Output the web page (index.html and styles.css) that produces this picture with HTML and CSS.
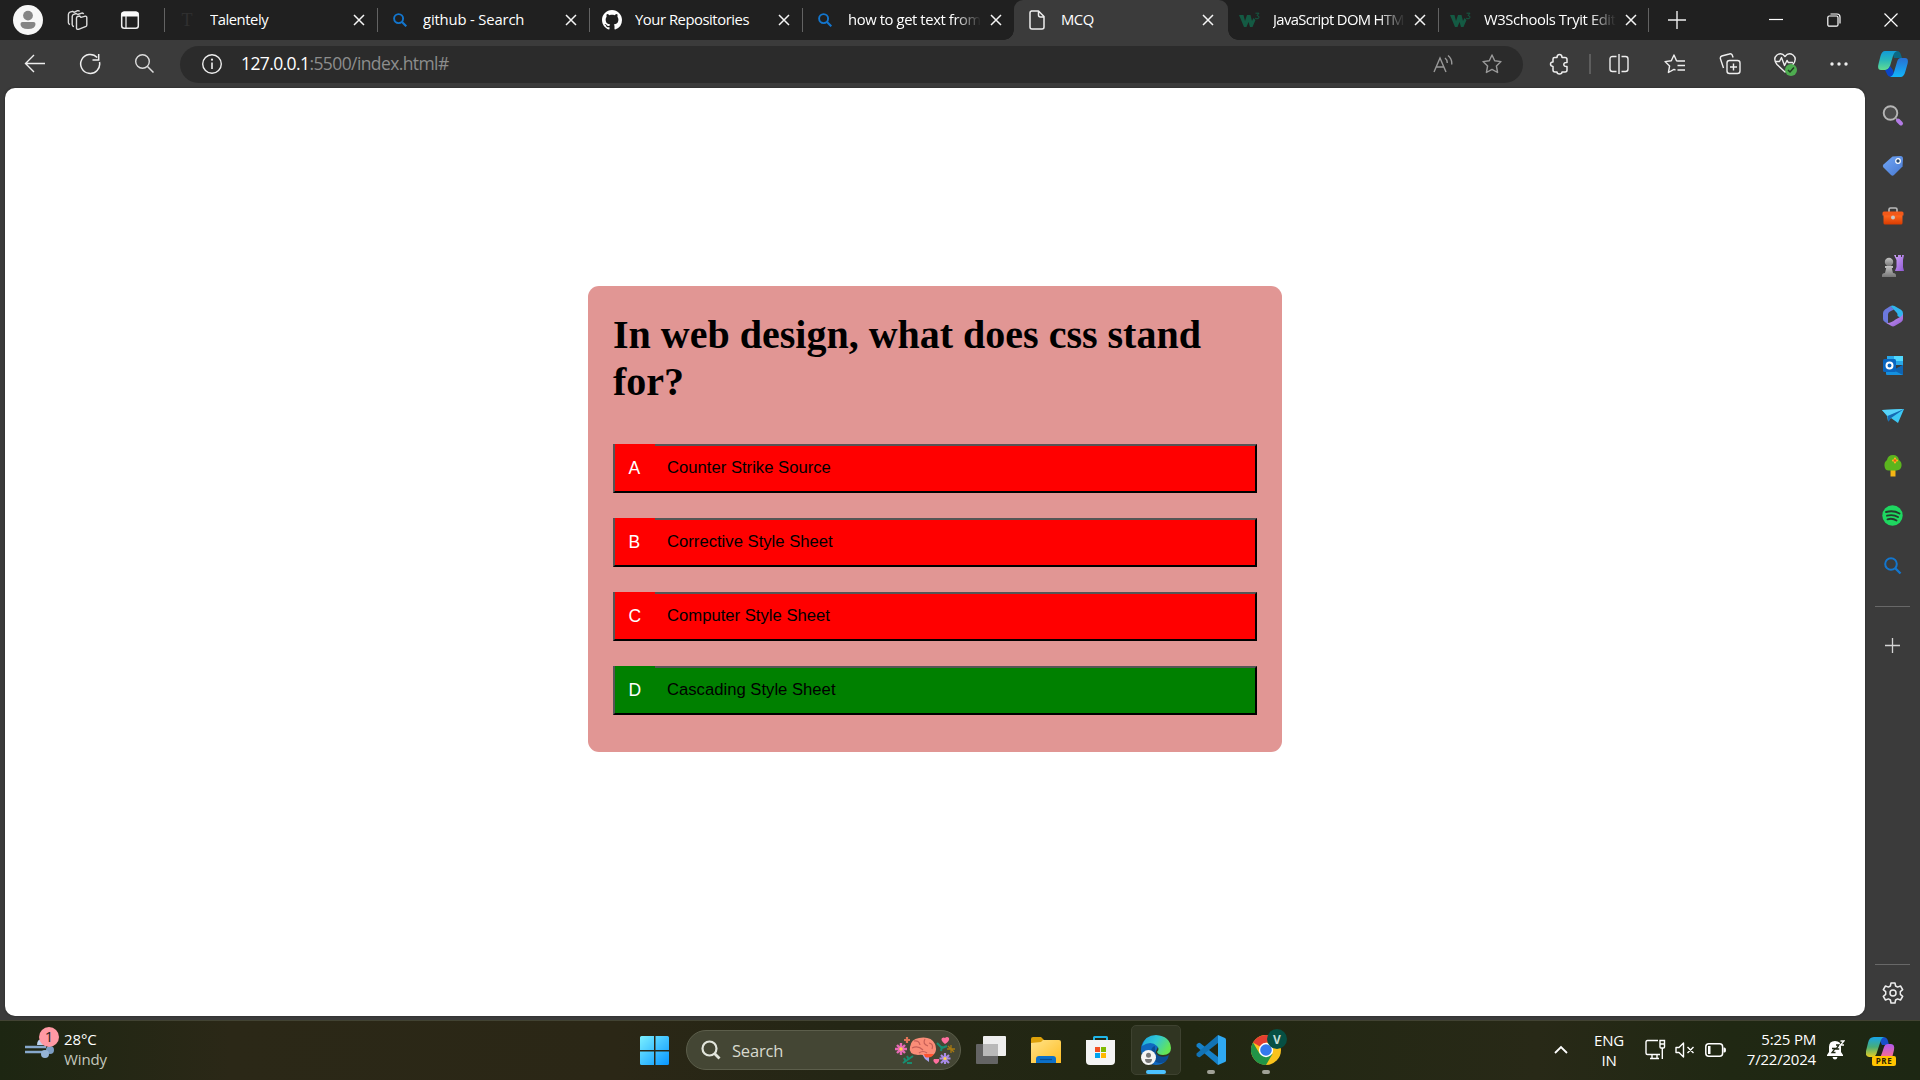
FILE: index.html
```html
<!DOCTYPE html>
<html lang="en">
<head>
<meta charset="utf-8">
<title>MCQ</title>
<link rel="stylesheet" href="styles.css">
</head>
<body>
<svg class="defs" width="0" height="0" aria-hidden="true">
  <defs>
    <linearGradient id="teal" x1="0" y1="0" x2="0" y2="1"><stop offset="0" stop-color="#129bd8"/><stop offset=".5" stop-color="#2bb8b8"/><stop offset="1" stop-color="#62dc91"/></linearGradient>
    <linearGradient id="blue" x1="0" y1="0" x2="0" y2="1"><stop offset="0" stop-color="#2870d3"/><stop offset="1" stop-color="#12b5fa"/></linearGradient>
    <linearGradient id="pilotL" x1="0" y1="0" x2="0" y2="1"><stop offset="0" stop-color="#17a5e9"/><stop offset=".5" stop-color="#48ad78"/><stop offset="1" stop-color="#e9cd21"/></linearGradient>
    <linearGradient id="pilotR" x1="0" y1="0" x2="0" y2="1"><stop offset="0" stop-color="#b058ee"/><stop offset="1" stop-color="#ff7088"/></linearGradient>
    <linearGradient id="win" x1="0" y1="0" x2="1" y2="1"><stop offset="0" stop-color="#7bf0ff"/><stop offset="1" stop-color="#0795ff"/></linearGradient>
    <linearGradient id="folder" x1="0" y1="0" x2="1" y2="1"><stop offset="0" stop-color="#ffe38a"/><stop offset="1" stop-color="#ffbd22"/></linearGradient>
    <linearGradient id="edgeTop" x1="0" y1="0" x2="1" y2=".5"><stop offset="0" stop-color="#159fe0"/><stop offset=".5" stop-color="#31c8d4"/><stop offset="1" stop-color="#65e554"/></linearGradient>
    <linearGradient id="tag" x1="0" y1="0" x2="1" y2="1"><stop offset="0" stop-color="#72a7f7"/><stop offset="1" stop-color="#4778d0"/></linearGradient>
    <linearGradient id="purple" x1="0" y1="0" x2="1" y2="1"><stop offset="0" stop-color="#d0a6f8"/><stop offset="1" stop-color="#9059d3"/></linearGradient>
    <linearGradient id="grey" x1="0" y1="0" x2="0" y2="1"><stop offset="0" stop-color="#c2c2c2"/><stop offset="1" stop-color="#777"/></linearGradient>
    <linearGradient id="orange" x1="0" y1="0" x2="0" y2="1"><stop offset="0" stop-color="#ff6a22"/><stop offset="1" stop-color="#d83b00"/></linearGradient>
    <symbol id="x" viewBox="0 0 12 12"><path d="M1 1l10 10M11 1L1 11" stroke="#f5f5f5" stroke-width="1.5" fill="none"/></symbol>
    <symbol id="bing" viewBox="0 0 14 14"><circle cx="5.6" cy="5.6" r="4.5" fill="none" stroke="#1376ce" stroke-width="1.9"/><path d="M9 9l4.3 4.3" stroke="#1376ce" stroke-width="2.1"/></symbol>
    <symbol id="w3" viewBox="0 0 22 16"><path d="M0 3h4.500l1.500 6 2-6h3.500l1.500 6 1.500-3 2 2-3 7h-2.500l-1.500-5-2 5H5z" fill="#145a43"/><path d="M16.500 1.200h3.500l-2 2.400q2 0 2 1.500 0 1.700-2 1.700-1.100 0-1.900-.7" fill="none" stroke="#145a43" stroke-width="1"/></symbol>
  </defs>
</svg>

<header class="tabstrip">
  <div class="strip-tools">
    <svg class="avatar" width="30" height="30" viewBox="0 0 30 30"><circle cx="15" cy="15" r="15" fill="#f7f7f7"/><circle cx="15" cy="10.600" r="4.900" fill="#858585"/><path d="M9.500 17h11q2 0 2 2 0 5-7.500 5t-7.500-5q0-2 2-2z" fill="#858585"/></svg>
    <svg class="spaces" width="22" height="22" viewBox="0 0 22 22" fill="none" stroke="#ddd" stroke-width="1.400" stroke-linejoin="round"><path d="M10.500 9q0-1.200 1.200-1.500l2-.5 1.300 1.400 4.300-1.200q1.500-.2 1.500 1.300v7.500q0 1.300-1.300 1.700l-7 2.600q-2 .4-2-1.300z"/><path d="M8 17.500q-1.700-.2-1.800-1.800V7.500q0-1.700 1.500-2.200l2.500-.8 1.500 1 4-1.400q1.500-.3 1.900 1M4 15.500q-1.500-.5-1.600-1.800V5.500q0-1.700 1.500-2.300l2.800-.9 1.300 1 3.500-1.600q1.500-.4 2 .8"/></svg>
    <svg class="actions" width="20" height="20" viewBox="0 0 20 20"><rect x="1.700" y="2.200" width="16.600" height="16" rx="2.500" fill="none" stroke="#eee" stroke-width="1.500"/><path d="M1.500 6.500V4.300Q1.500 1.500 4.300 1.500h11.400q2.800 0 2.800 2.800v2.200z" fill="#fafafa"/><path d="M6 6v12" stroke="#ddd" stroke-width="1.400"/></svg>
  </div>
  <nav class="tabs">
    <div class="tab t213"><span class="fav talent">T</span><span class="title">Talentely</span><svg class="close" width="12" height="12"><use href="#x"/></svg></div>
    <div class="tab t212"><span class="fav"><svg width="14" height="14"><use href="#bing"/></svg></span><span class="title wide">github - Search</span><svg class="close" width="12" height="12"><use href="#x"/></svg></div>
    <div class="tab t213"><span class="fav"><svg width="20" height="20" viewBox="0 0 16 16"><path fill="#fff" fill-rule="evenodd" d="M8 0C3.580 0 0 3.580 0 8c0 3.540 2.290 6.530 5.470 7.590.4.070.55-.17.55-.38 0-.19-.01-.82-.01-1.490-2.010.37-2.530-.49-2.690-.94-.09-.23-.48-.94-.82-1.130-.28-.15-.68-.52-.01-.53.63-.01 1.080.58 1.230.82.72 1.210 1.870.87 2.330.66.07-.52.28-.87.51-1.070-1.780-.2-3.640-.89-3.640-3.950 0-.87.31-1.590.82-2.150-.08-.2-.36-1.020.08-2.120 0 0 .67-.21 2.200.82.64-.18 1.320-.27 2-.27s1.360.09 2 .27c1.530-1.040 2.200-.82 2.200-.82.44 1.100.16 1.920.08 2.120.51.56.82 1.270.82 2.150 0 3.070-1.870 3.750-3.650 3.950.29.25.54.73.54 1.480 0 1.070-.01 1.930-.01 2.200 0 .21.15.46.55.38A8.010 8.010 0 0016 8c0-4.420-3.580-8-8-8z"/></svg></span><span class="title">Your Repositories</span><svg class="close" width="12" height="12"><use href="#x"/></svg></div>
    <div class="tab t212"><span class="fav"><svg width="14" height="14"><use href="#bing"/></svg></span><span class="title fade">how to get text from</span><svg class="close" width="12" height="12"><use href="#x"/></svg></div>
    <div class="tab t214 active"><span class="fav"><svg width="18" height="20" viewBox="0 0 18 20" fill="none" stroke="#eee" stroke-width="1.500" stroke-linejoin="round"><path d="M3 1h7.500L16 6.500V17q0 2-2 2H4q-2 0-2-2V3q0-2 2-2M10.500 1v4q0 2 2 2H16"/></svg></span><span class="title">MCQ</span><svg class="close" width="12" height="12"><use href="#x"/></svg></div>
    <div class="tab t210"><span class="fav"><svg width="22" height="16"><use href="#w3"/></svg></span><span class="title fade tight">JavaScript DOM HTM</span><svg class="close" width="12" height="12"><use href="#x"/></svg></div>
    <div class="tab t211"><span class="fav"><svg width="22" height="16"><use href="#w3"/></svg></span><span class="title fade">W3Schools Tryit Edit</span><svg class="close" width="12" height="12"><use href="#x"/></svg></div>
  </nav>
  <svg class="newtab" width="18" height="18" viewBox="0 0 18 18"><path d="M9 0v18M0 9h18" stroke="#eee" stroke-width="1.400"/></svg>
  <div class="winctl">
    <svg width="14" height="14" viewBox="0 0 14 14"><path d="M0 6.500h14" stroke="#fff" stroke-width="1.200"/></svg>
    <svg width="14" height="14" viewBox="0 0 14 14" fill="none" stroke="#fff" stroke-width="1.200"><rect x=".8" y="3" width="10.200" height="10.200" rx="1.500"/><path d="M3.500 1h6.500q3 0 3 3v6.500"/></svg>
    <svg width="14" height="14" viewBox="0 0 14 14"><path d="M.5.500l13 13M13.500.500l-13 13" stroke="#fff" stroke-width="1.200"/></svg>
  </div>
</header>

<div class="toolbar">
  <div class="nav">
    <svg width="22" height="20" viewBox="0 0 22 20"><path d="M21 9.500H2M10 1L1.500 9.500 10 18" fill="none" stroke="#eee" stroke-width="1.400"/></svg>
    <svg width="22" height="22" viewBox="0 0 22 22"><path d="M20.500 9A9.500 9.500 0 1 1 18.200 4.500M19.700 1v6h-6.200" fill="none" stroke="#eee" stroke-width="1.500"/></svg>
    <svg width="20" height="20" viewBox="0 0 20 20"><circle cx="8.500" cy="7.500" r="6.800" fill="none" stroke="#ddd" stroke-width="1.400"/><path d="M13.500 12.500l6 6" stroke="#ddd" stroke-width="1.500"/></svg>
  </div>
  <div class="omnibox">
    <svg class="info" width="22" height="22" viewBox="0 0 22 22"><circle cx="11" cy="11" r="9.300" fill="none" stroke="#eee" stroke-width="1.400"/><path d="M11 9.500v6.500" stroke="#eee" stroke-width="1.600"/><circle cx="11" cy="6.700" r="1.100" fill="#eee"/></svg>
    <span class="url"><b>127.0.0.1</b>:5500/index.html#</span>
    <svg class="aloud" width="20" height="20" viewBox="0 0 20 20" fill="none" stroke="#999" stroke-width="1.400"><path d="M1 18L7 4l6 14M3 13h8M12 4q2.500 2 2.200 5M15 1.500q4.300 3.500 3.700 9"/></svg>
    <svg class="star" width="22" height="22" viewBox="0 0 22 22"><path d="M11 2l2.700 5.800 6.300.8-4.600 4.400 1.200 6.500L11 16.400l-5.600 3.100L6.600 13 2 8.600l6.300-.8z" fill="none" stroke="#999" stroke-width="1.400" stroke-linejoin="round"/></svg>
  </div>
  <div class="extensions">
    <svg class="puzzle" width="20" height="22" viewBox="0 0 20 22"><path d="M5.500 4.500H8Q8 1.500 10.500 1.500T13 4.500h3q2 0 2 2v3q-3.200-.3-3.200 2t3.200 2v3.500q0 2-2 2h-3q0 2-2.500 2t-2.500-2H6q-2 0-2-2v-3.500Q1.500 13.300 1.500 11.100T4 8.900V6q0-1.500 1.500-1.500" fill="none" stroke="#eee" stroke-width="1.500" stroke-linejoin="round"/></svg>
    <i></i>
    <svg class="split" width="20" height="20" viewBox="0 0 20 20" fill="none" stroke="#eee" stroke-width="1.400"><path d="M7.500 2.500h-4Q1 2.500 1 5v10q0 2.500 2.500 2.500h4M12.500 2.500h4Q19 2.500 19 5v10q0 2.500-2.500 2.500h-4M10 0v20"/></svg>
    <svg class="favorites" width="22" height="22" viewBox="0 0 22 22" fill="none" stroke="#eee" stroke-width="1.400" stroke-linejoin="round"><path d="M14 8l-1.500-.2L10 2 7.300 7.800 1 8.600 5.600 13l-1.200 6.500L10 16.400l1.500.8M13.500 8H21M13.500 12.500H21M13.500 17H21"/></svg>
    <svg class="collections" width="22" height="22" viewBox="0 0 22 22" fill="none" stroke="#eee" stroke-width="1.400"><rect x="8" y="7.500" width="13" height="13" rx="2.500"/><path d="M14.500 10.500v7M11 14h7M4.500 15L1.500 6q-.700-2.200 1.300-3l7.500-2q2-.700 3 1.200l.8 2.300"/></svg>
    <svg class="essentials" width="24" height="24" viewBox="0 0 24 24"><path d="M12 20L4 12.500Q-.5 6.500 4 3q4.500-3 8 1.500 3.500-4.500 8-1.500 4.500 3.500 0 9.500zM2 9.500h4.500l2-4 3 8 2.500-5 1.300 2H20" fill="none" stroke="#eee" stroke-width="1.400" stroke-linejoin="round"/><circle cx="18" cy="18" r="6" fill="#4eac50"/><path d="M15 18l2 2 4-4.500" fill="none" stroke="#213c21" stroke-width="1.500"/></svg>
    <svg class="more" width="18" height="18" viewBox="0 0 18 18" fill="#eee"><circle cx="2" cy="9" r="1.700"/><circle cx="9" cy="9" r="1.700"/><circle cx="16" cy="9" r="1.700"/></svg>
  </div>
  <svg class="copilot" width="30" height="28" viewBox="0 0 30 28"><path d="M14 1h5q3 0 4 4l1 3h-8z" fill="#0b6985"/><path d="M7 1h12q-3 1-4 5l-3 10q-1 4-5 4H3q-4 0-2.500-6l2-8Q4 1 7 1z" fill="url(#teal)"/><path d="M7 20q3 0 5-4l3 4 2 7h-3q-4 0-5-3z" fill="#0a45c8"/><path d="M23 8h4q4 0 2.500 6l-2 7q-1.500 6-5 6H12q3-1 4-5l3-10q1-4 4-4z" fill="url(#blue)"/></svg>
</div>

<div class="body">
  <main class="page">
    <section class="card">
      <h1>In web design, what does css stand for?</h1>
      <button class="option wrong"><span>A</span>Counter Strike Source</button>
      <button class="option wrong"><span>B</span>Corrective Style Sheet</button>
      <button class="option wrong"><span>C</span>Computer Style Sheet</button>
      <button class="option right"><span>D</span>Cascading Style Sheet</button>
    </section>
  </main>
  <aside class="sidebar">
    <svg viewBox="0 0 22 22"><circle cx="8.500" cy="8" r="6.800" fill="#4b4b4b" stroke="#b5b5b5" stroke-width="1.900"/><path d="M13.500 13l2 2" stroke="#999" stroke-width="1.500"/><path d="M16 15.500l3 3" stroke="#b37be6" stroke-width="4" stroke-linecap="round"/></svg>
    <svg viewBox="0 0 22 22"><path d="M10.500 1.500L18.500 1q2.500 0 2.500 2.500l-.5 8L12 20q-1.500 1.500-3 0l-7.500-7.500Q0 11 1.500 9.500z" fill="url(#tag)"/><circle cx="16" cy="6" r="2.300" fill="#27486f" stroke="#fff" stroke-width="1.200"/></svg>
    <svg viewBox="0 0 22 22"><path d="M7 7V4.500Q7 3 8.500 3h5Q15 3 15 4.500V7" fill="none" stroke="#bbb" stroke-width="1.600"/><path d="M1.500 10h19v8q0 1.500-1.500 1.500H3q-1.500 0-1.500-1.500z" fill="url(#orange)"/><path d="M2 6.500h18q1.500 0 1.500 1.500v2.500H.5V8Q.5 6.500 2 6.500" fill="#f2591a"/><circle cx="11" cy="12.500" r="2" fill="#c8c8c8"/></svg>
    <svg viewBox="0 0 22 22"><path d="M12 0h2v2h2V0h3v2h1V0h2l-1 5v7l1 4h-9l1.500-4V5z" fill="url(#purple)"/><circle cx="7" cy="7" r="4.200" fill="url(#grey)"/><path d="M3 11h8v2H9.800l1.200 5q3 0 3 2.500V22H0v-1.500Q0 18 3 18l1.200-5H3z" fill="url(#grey)"/></svg>
    <svg viewBox="0 0 22 22"><path d="M8.500 1L3 4.500Q1 6 1 8v6q0 2 2 3l3 1.500V9.500q0-2 2-3l4-2z" fill="#6b78dd"/><path d="M8.500 1q2-1.200 4 0L19 4.800q2 1.200 2 3.500v6L15.500 11V9.500Q15.500 8 14 7z" fill="#2fb5ee"/><path d="M2.500 17L9 20.800q2 1.200 4 0l6-3.500q2-1.200 2-3.200V8q0 2-2 3.500l-5.500 3q-2 1.500-4 2.500-4 2-7 0z" fill="url(#purple)"/></svg>
    <svg viewBox="0 0 22 22"><path d="M5 1h16v9H5z" fill="#28a8ea"/><path d="M12 1h9v5h-9z" fill="#50d9ff"/><path d="M4 10l9 5 8-5v10H5q-1 0-1-1z" fill="#1490df"/><path d="M21 10v10l-10-5z" fill="#0f64b1"/><rect x="1" y="4" width="13" height="13" rx="1.500" fill="#0a66bf"/><circle cx="7.500" cy="10.500" r="3" fill="none" stroke="#fff" stroke-width="2"/></svg>
    <svg viewBox="0 0 22 22"><path d="M0 5l22-1-6 14-7-5-3 3-1-5z" fill="#3cc8f5"/><path d="M0 5l22-1L6 11z" fill="#57d3fa"/><path d="M22 4L5.500 11l1 6L9 13z" fill="#1569b3"/></svg>
    <svg viewBox="0 0 22 22"><path d="M8.500 14h5v7.500h-5z" fill="#f5b514"/><path d="M11 0q5 0 6 5 3 2 2.500 6t-5 4.500h-8Q3 15.500 2.500 11 2 7 5 5q1-5 6-5z" fill="#5bb51e"/><path d="M13 3.500v4M11 5.500h4" stroke="#ffb31d" stroke-width="2.200" stroke-linecap="round"/><circle cx="13" cy="5.500" r="1.200" fill="#e65a18"/></svg>
    <svg viewBox="0 0 22 22"><circle cx="10.500" cy="10.500" r="10.200" fill="#1ed760"/><path d="M4 7q7.500-2 13.500 1.500M5 10.700q6-1.700 11 1.300M5.500 14.300q5-1.400 9 1.200" fill="none" stroke="#263a2c" stroke-width="1.900" stroke-linecap="round"/></svg>
    <svg viewBox="0 0 22 22"><circle cx="9" cy="9" r="5.800" fill="none" stroke="#1376ce" stroke-width="2"/><path d="M13 13l5.500 5.500" stroke="#1376ce" stroke-width="2.400"/></svg>
    <hr>
    <svg class="add" viewBox="0 0 22 22"><path d="M10.500 3v15M3 10.500h15" stroke="#d5d5d5" stroke-width="1.300"/></svg>
    <hr class="lower">
    <svg class="gear" viewBox="0 0 22 22" fill="none" stroke="#eee" stroke-width="1.500" stroke-linejoin="round"><path d="M9 1h4l.6 3 2 1.100 2.900-1.100 2.200 3.700-2.400 2v2.600l2.400 2-2.200 3.700-2.900-1.100-2 1.100L13 21H9l-.6-3-2-1.100L3.500 18l-2.200-3.700 2.400-2V9.700l-2.400-2L3.500 4l2.900 1.100 2-1.100z"/><circle cx="11" cy="11" r="3"/></svg>
  </aside>
</div>

<footer class="taskbar">
  <div class="weather">
    <svg width="34" height="36" viewBox="0 0 34 36"><path d="M12 19q0-6 5-6 4 0 3 6z" fill="#bdd2ec"/><path d="M0 19.700h21v2.600H0zM0 24.700h22v2.600H0z" fill="#86a8cc"/><circle cx="25" cy="24" r="4" fill="#7c9dc3"/><circle cx="20" cy="28" r="4" fill="#95b4d5"/><circle cx="24" cy="11" r="10" fill="#ff99a4"/><text x="24" y="16" text-anchor="middle" class="count">1</text></svg>
    <p>28°C<br><span>Windy</span></p>
  </div>
  <div class="apps">
    <svg class="start" width="30" height="30" viewBox="0 0 30 30"><path d="M1.500 0H14v14H0V1.500Q0 0 1.500 0M15.500 0h12q1.500 0 1.500 1.500V14H15.500M0 15.500h14V29H1.500Q0 29 0 27.500M15.500 15.500H29v12q0 1.500-1.500 1.500h-12" fill="url(#win)"/></svg>
    <div class="search">
      <svg width="20" height="20" viewBox="0 0 20 20"><circle cx="8.500" cy="8.500" r="7" fill="none" stroke="#e2e5dc" stroke-width="2.200"/><path d="M13.500 13.500l5 5" stroke="#e2e5dc" stroke-width="2.800"/></svg>
      <span>Search</span>
      <svg class="brain" width="60" height="28" viewBox="0 0 60 28">
        <path d="M27 18l7 0 0 8-4-3z" fill="#a9a2ee"/><path d="M15 11q1-8 9-9 12-2 16 6 2 5 0 9-4 5-10 3-3-2-7-1-10-1-8-8z" fill="#fa8d78"/><path d="M19 5q5-1 6 4M30 3q-3 5 3 7M17 12q6-3 11 2M34 7q5 1 3 6M24 17q4-3 8 0" fill="none" stroke="#c65f57" stroke-width="1.200"/><path d="M29 18h10q-3 5-9 3z" fill="#ff5330"/>
        <path d="M6 7v12M0 13h12M2 9l8 8M10 9l-8 8" stroke="#e869b5" stroke-width="2.400"/><circle cx="6" cy="13" r="1.700" fill="#ffd14d"/><path d="M50 17v11M44.500 22.500h11M46 19l8 8M54 19l-8 8" stroke="#a98be6" stroke-width="2.200"/><circle cx="50" cy="22.500" r="1.600" fill="#ffd14d"/>
        <path d="M12 1v6M9 4h6" stroke="#df7458" stroke-width="2.200"/><path d="M50 8q-5-4-3-6 2-1 3 0 2-2 4 0 1 3-4 6M41 28q-4-3-2-5l2 0 3 0q1 3-3 5" fill="#ff6f9f"/><path d="M42 7l5 5 5-2M46 15l1-5M8 27l10-7M9 22l2 4M12 20l2 4M12 27h5" fill="none" stroke="#188d70" stroke-width="2"/><path d="M56 9v8M52 13h8M53 10l6 6" stroke="#a77911" stroke-width="1.300"/>
      </svg>
    </div>
    <svg class="app" width="30" height="30" viewBox="0 0 30 30"><rect x="0" y="8" width="22" height="20" rx="1" fill="#646464"/><rect x="7" y="0" width="23" height="20" rx="1" fill="#eee"/><path d="M7 8h15v12H7z" fill="#b9b9b9"/></svg>
    <svg class="app" width="30" height="30" viewBox="0 0 30 30"><path d="M0 3q0-2 2-2h8l3 3v6H0z" fill="#dda10a"/><path d="M0 7l10-1 2-2h16q2 0 2 2v21H0z" fill="url(#folder)"/><path d="M5 27v-4q0-3 3-3h14q3 0 3 3v4z" fill="#0c70c9"/><path d="M9 23.500h12" stroke="#084c91" stroke-width="1.200"/></svg>
    <svg class="app" width="30" height="30" viewBox="0 0 30 30"><path d="M8 6V1.500Q8 1 8.500 1h12q.5 0 .5.500V6" fill="none" stroke="#20b6e8" stroke-width="2"/><path d="M0 4h29v21q0 4-4 4H4q-4 0-4-4z" fill="#f4f4f4"/><path d="M9 11h5v5H9z" fill="#f25022"/><path d="M15 11h5v5h-5z" fill="#7fba00"/><path d="M9 17h5v5H9z" fill="#00a4ef"/><path d="M15 17h5v5h-5z" fill="#ffb900"/></svg>
    <div class="slot current">
      <svg width="30" height="30" viewBox="0 0 30 30"><path d="M0 15Q0 5 8 3q7 0 10 7l-6 12q2 7 13 4-4 4-10 4Q1 29 0 15z" fill="#1068c0"/><path d="M1 11Q4 0 15 0q14 1 15 13 0 7-8 7-5 0-6-3 3-3 0-6-6-6-15 0z" fill="url(#edgeTop)"/><path d="M10 17q0-5 4-6-1 7 4 10 5 2 10-1-2 9-10 8-8-2-8-11z" fill="#0b4d94"/><circle cx="7.500" cy="22.500" r="7.500" fill="#f4f4f4"/><circle cx="7.500" cy="20.300" r="2.500" fill="#777"/><path d="M4 24h7q0 4-3.500 4T4 24" fill="#777"/></svg><i></i>
    </div>
    <div class="slot">
      <svg width="30" height="30" viewBox="0 0 30 30"><path d="M.5 9.500q2-2.500 3.500-1.500l18 14V30L.5 11.500z" fill="#1681c9"/><path d="M.5 20.500q2 2.500 3.500 1.500L22 8V0L.5 18.500z" fill="#1273b5"/><path d="M22 0l7 3q1 .5 1 1.500v21q0 1-1 1.500l-7 3z" fill="#2fa9f2"/></svg><i></i>
    </div>
    <div class="slot">
      <svg class="chrome" width="38" height="36" viewBox="0 0 38 36"><circle cx="15" cy="21" r="15" fill="#fbc31d"/><path d="M15 21L2 13.500A15 15 0 0 1 28 13.500H15z" fill="#e43e30"/><path d="M15 21l6.500 4L15 36A15 15 0 0 1 2 13.500l6.500 11z" fill="#229447"/><circle cx="15" cy="21" r="7.200" fill="#fff"/><circle cx="15" cy="21" r="5.800" fill="#3379ed"/><circle cx="26" cy="10" r="10" fill="#064f43"/><text x="26" y="14.500" text-anchor="middle" class="vee">V</text></svg><i></i>
    </div>
  </div>
  <div class="tray">
    <svg class="chev" width="14" height="10" viewBox="0 0 14 10"><path d="M1 8l6-6 6 6" fill="none" stroke="#fff" stroke-width="1.800"/></svg>
    <p class="lang">ENG<br>IN</p>
    <svg class="net" width="21" height="21" viewBox="0 0 21 21" fill="none" stroke="#fff" stroke-width="1.400"><path d="M13 1.500H2.500q-1.500 0-1.500 1.500v11q0 1.500 1.500 1.500H15M5 19.500h9M7 16v3M12 16v3M15 1.500h4.500V8q0 1-1 1H16q-1 0-1-1zM15 5h4.500M17.300 9v11"/></svg>
    <svg class="vol" width="20" height="16" viewBox="0 0 20 16" fill="none" stroke="#fff" stroke-width="1.400" stroke-linejoin="round"><path d="M1 5.500h3L8.500 1v14L4 10.500H1zM12.500 5l6 6M18.500 5l-6 6"/></svg>
    <svg class="bat" width="21" height="14" viewBox="0 0 21 14"><rect x=".8" y=".8" width="16.800" height="12.400" rx="3" fill="none" stroke="#fff" stroke-width="1.500"/><path d="M3 3h2.500v8H3zM18.500 4.500h1q1.500 0 1.500 2.500t-1.500 2.500h-1z" fill="#fff"/></svg>
    <p class="clock">5:25 PM<br>7/22/2024</p>
    <svg class="bell" width="18" height="20" viewBox="0 0 18 20"><path d="M8 1Q2 1 2 7v5l-2 3v1h16v-1l-2-3V7q0-6-6-6M5.500 17h5q-.5 2.500-2.500 2.500T5.500 17" fill="#fff"/><path d="M5 8.500h3.200L5 12.500h3.500M9 5h3L9 9h3.200" fill="none" stroke="#1e2713" stroke-width="1.300"/><path d="M13.500 1H17l-3.500 4H17" fill="none" stroke="#fff" stroke-width="1.300"/></svg>
    <svg class="pre" width="30" height="30" viewBox="0 0 30 30"><path d="M12 0h5q4 0 5 4l1 4h-7z" fill="#174fc8"/><path d="M8 0h10q-3 1-4 6l-3 9q-1 5-5 5H3q-4 0-3-6l2-8Q3 0 8 0z" fill="url(#pilotL)"/><path d="M22 7h3q4 0 3 6l-2 8H13q2-1 3-5l2-6q1-3 4-3z" fill="url(#pilotR)"/><rect x="6" y="19" width="24" height="10" rx="2" fill="#ffc400"/><text x="18" y="27" text-anchor="middle" class="pretext">PRE</text></svg>
  </div>
</footer>
</body>
</html>
```
FILE: styles.css
```css
* { box-sizing: border-box; }
body { margin: 0; width: 1920px; height: 1080px; overflow: hidden; display: flex; flex-direction: column; background: #3b3b3b; font-family: "Open Sans", "Noto Sans", sans-serif; color: #fff; }
svg { display: block; flex: none; }
.defs { position: absolute; }
p { margin: 0; }

.tabstrip { height: 40px; background: #202020; display: flex; align-items: center; flex: none; }
.strip-tools { width: 164px; display: flex; align-items: center; padding-left: 13px; }
.spaces { margin-left: 23px; }
.actions { margin-left: 32px; }
.tabs { display: flex; height: 40px; }
.tab { display: flex; align-items: center; height: 40px; padding: 0 12.500px 0 12px; background: linear-gradient(#636363, #636363) 0 8px / 1px 24px no-repeat; }
.tab:last-child { background: linear-gradient(#636363, #636363) 0 8px / 1px 24px no-repeat, linear-gradient(#636363, #636363) 100% 8px / 1px 24px no-repeat; }
.tab.t210 { width: 210px; padding-left: 11px; background: none; }
.t211 { width: 211px; }
.t212 { width: 212px; }
.t213 { width: 213px; }
.t214 { width: 214px; }
.fav { width: 22px; margin-right: 12px; display: flex; justify-content: center; flex: none; }
.talent { font: 18px "Liberation Serif", serif; color: #303030; }
.title { flex: 1; min-width: 0; overflow: hidden; white-space: nowrap; font-size: 14.800px; line-height: 20px; padding-bottom: 2px; letter-spacing: -.45px; }
.wide { letter-spacing: -.15px; }
.fade { letter-spacing: -.4px; -webkit-mask-image: linear-gradient(90deg, #000 80%, transparent 100%); mask-image: linear-gradient(90deg, #000 80%, transparent 100%); }
.tight { letter-spacing: -.65px; }
.close { margin-left: 16px; }
.fade + .close { margin-left: 9px; }
.tab.active { padding-right: 14px; background: #3b3b3b; border-radius: 9px 9px 0 0; position: relative; }
.active .fav { margin-right: 13px; }
.active::before, .active::after { content: ""; position: absolute; bottom: 0; width: 10px; height: 10px; }
.active::before { left: -10px; background: radial-gradient(circle at 0 0, transparent 9.500px, #3b3b3b 10px); }
.active::after { right: -10px; background: radial-gradient(circle at 100% 0, transparent 9.500px, #3b3b3b 10px); }
.newtab { margin-left: 19px; }
.winctl { margin-left: auto; padding-right: 22px; display: flex; gap: 43.500px; }

.toolbar { height: 48px; flex: none; display: flex; align-items: center; padding-left: 24px; }
.nav { width: 156px; display: flex; align-items: center; gap: 33px; }
.omnibox { width: 1343px; height: 37px; border-radius: 19px; background: #2b2b2b; display: flex; align-items: center; padding: 0 20px 0 21px; }
.url { margin-left: 18px; padding-bottom: 2px; font-size: 17.500px; letter-spacing: -.6px; color: #8d8d8d; flex: 1; }
.url b { font-weight: 400; color: #fff; }
.aloud { margin-right: 28px; }
.extensions { width: 301px; margin-left: 26px; display: flex; align-items: center; }
.extensions i { flex: none; width: 2px; height: 20px; margin-left: 20px; background: #5d5d5d; }
.split { margin-left: 18px; }
.favorites { margin-left: 35px; }
.collections { margin-left: 33px; }
.essentials { margin-left: 32px; }
.more { margin-left: 33px; }
.copilot { margin-left: 28px; }

.body { height: 932px; flex: none; display: flex; padding-left: 5px; }
.page { width: 1860px; height: 928px; background: #fff; border-radius: 10px; box-shadow: 0 0 2px #222; display: flex; justify-content: center; align-items: flex-start; padding-top: 198px; }
.card { width: 694px; height: 466px; border-radius: 11px; background: #e19694; padding: 25px; color: #000; display: flex; flex-direction: column; }
.card h1 { margin: 0 0 37px; height: 96px; flex: none; font: bold 40px/47px "Liberation Serif", "Times New Roman", serif; }
.option { height: 49px; flex: none; margin: 0 0 25px; padding: 0 0 1px; border: 2px solid; border-color: #555 #000 #000 #555; border-radius: 0; display: flex; align-items: center; font: 16.670px "Liberation Sans", Arial, sans-serif; color: #000; text-align: left; }
.option span { width: 40px; margin: -1px 12px 0 0; padding-left: 13.500px; background: inherit; color: #fff; height: 47px; line-height: 48px; font-size: 17.500px; }
.wrong { background: red; }
.right { background: green; }

.sidebar { width: 55px; padding: 17px 0 0 17px; display: flex; flex-direction: column; gap: 28px; }
.sidebar svg { width: 22px; height: 22px; }
.sidebar hr { width: 35px; height: 1px; border: 0; margin: 1px 0 0 -7px; background: #686868; }
.sidebar .lower { margin-top: 279px; }
.sidebar .gear { margin-top: -11px; }

.taskbar { height: 60px; flex: none; display: flex; align-items: flex-start; border-top: 1px solid #424333; background: linear-gradient(90deg, #1d2612 0, #2b2817 12%, #2b2716 32%, #242615 44%, #212712 62%, #282917 80%, #202813 90%, #1d2713 100%); }
.taskbar p { font-size: 15px; line-height: 20px; }
.weather { width: 640px; display: flex; padding: 5px 0 0 25px; }
.weather p { margin: 3px 0 0 5px; letter-spacing: -.1px; }
.weather p span { color: #c5c7bd; }
.count { font: 15px "Open Sans", sans-serif; fill: #222; }
.apps { width: 914px; height: 59px; display: flex; align-items: flex-start; }
.start { margin-top: 15px; }
.search { width: 275px; height: 40px; margin: 9px 15px 0 16px; border: 1px solid #5c5e4b; border-radius: 20px; background: #444634; display: flex; align-items: center; padding: 0 5px 0 14px; }
.search span { flex: 1; margin-left: 11px; font-size: 16.500px; letter-spacing: -.2px; color: #d8dace; }
.app { margin: 15px 25px 0 0; }
.slot { width: 50px; height: 50px; margin: 4px 5px 0 0; padding-top: 9px; border: 1px solid transparent; border-radius: 5px; display: flex; flex-direction: column; align-items: center; justify-content: space-between; }
.app + .slot { margin-left: -10px; }
.current { border-color: #3e4230; background: #303522; }
.slot i { width: 8px; height: 4px; border-radius: 2px; background: #a0a197; }
.current i { width: 20px; background: #4cc2ff; }
.chrome { margin: -6px -8px 0 0; }
.vee { font: bold 12px "Open Sans", sans-serif; fill: #c5dbd5; }
.tray { display: flex; width: 366px; }
.chev { margin: 24px 25px 0 0; }
.lang { width: 32px; margin-top: 9px; text-align: center; letter-spacing: -.2px; }
.net { margin: 18px 9px 0 20px; }
.vol { margin: 21px 10px 0 0; }
.bat { margin: 22px 0 0; }
.clock { width: 90px; margin-top: 8px; text-align: right; letter-spacing: -.2px; white-space: nowrap; }
.bell { margin: 19px 0 0 11px; }
.pre { margin: 16px 0 0 21px; }
.pretext { font: bold 8px "Open Sans", sans-serif; letter-spacing: .5px; fill: #2a2200; }
```
